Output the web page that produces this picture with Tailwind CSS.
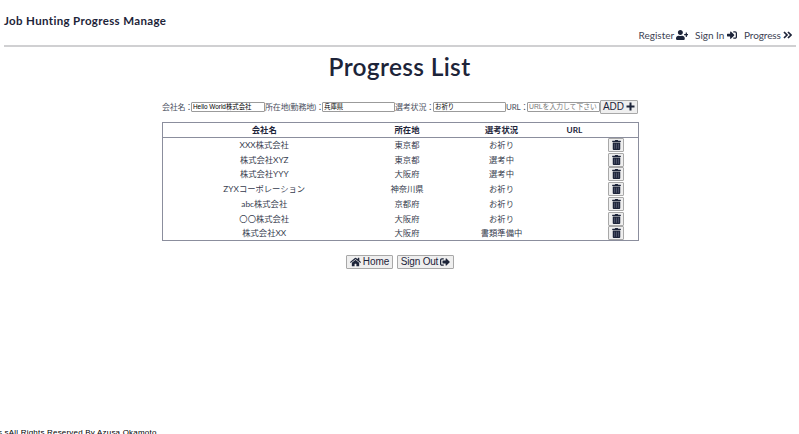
<!DOCTYPE html>
<html lang="ja">
<head>
<meta charset="utf-8">
<title>Job Hunting Progress Manage</title>
<script src="https://cdn.jsdelivr.net/npm/@tailwindcss/browser@4"></script>
</head>
<body class="bg-white text-[#1d2439] font-[Lato,'Noto_Sans_CJK_JP',sans-serif]">
<svg class="hidden">
  <symbol id="trash" viewBox="0 0 448 512"><path d="M32 464a48 48 0 0 0 48 48h288a48 48 0 0 0 48-48V128H32zM432 32H312l-9.4-18.7A24 24 0 0 0 281.1 0H166.8a23.72 23.72 0 0 0-21.4 13.3L136 32H16A16 16 0 0 0 0 48v32a16 16 0 0 0 16 16h416a16 16 0 0 0 16-16V48a16 16 0 0 0-16-16z"/><path d="M128 208v224M224 208v224M320 208v224" stroke="#70748a" stroke-width="30" stroke-linecap="round"/></symbol>
</svg>
<div class="h-[434px] w-[799px] overflow-hidden flex flex-col">
  <header class="ml-1 mr-[3px] h-[47px] shrink-0 border-b-2 border-[#d0d0d2] flex flex-col">
    <h1 class="mt-[14px] h-[14px] leading-[14px] text-[11.5px] font-bold tracking-[0.35px] whitespace-nowrap">Job Hunting Progress Manage</h1>
    <nav class="h-[14px] leading-[14px] text-[10px] text-[#3c4254] flex justify-end items-center pr-[4px] whitespace-nowrap">
      <span class="w-[35px]">Register</span>
      <svg class="ml-[2px] w-[12.5px] h-[10px] fill-[#1d2439]" viewBox="0 0 640 512"><path d="M624 208h-64v-64c0-8.8-7.2-16-16-16h-32c-8.8 0-16 7.2-16 16v64h-64c-8.8 0-16 7.2-16 16v32c0 8.8 7.2 16 16 16h64v64c0 8.8 7.2 16 16 16h32c8.8 0 16-7.2 16-16v-64h64c8.8 0 16-7.2 16-16v-32c0-8.8-7.2-16-16-16zm-400 48c70.7 0 128-57.3 128-128S294.7 0 224 0 96 57.3 96 128s57.3 128 128 128zm89.6 32h-16.7c-22.2 10.2-46.9 16-72.9 16s-50.6-5.8-72.9-16h-16.7C60.2 288 0 348.2 0 422.4V464c0 26.5 21.5 48 48 48h352c26.5 0 48-21.5 48-48v-41.6c0-74.2-60.2-134.4-134.4-134.4z"/></svg>
      <span class="ml-[7px] w-[30px]">Sign In</span>
      <svg class="ml-[2px] w-[10px] h-[10px] fill-[#1d2439]" viewBox="0 0 512 512"><path d="M416 448h-84c-6.6 0-12-5.4-12-12v-40c0-6.6 5.4-12 12-12h84c17.7 0 32-14.3 32-32V160c0-17.7-14.3-32-32-32h-84c-6.6 0-12-5.4-12-12V76c0-6.6 5.4-12 12-12h84c53 0 96 43 96 96v192c0 53-43 96-96 96zm-47-201L201 79c-15-15-41-4.5-41 17v96H24c-13.3 0-24 10.7-24 24v96c0 13.3 10.7 24 24 24h136v96c0 21.5 26 32 41 17l168-168c9.3-9.4 9.3-24.6 0-34z"/></svg>
      <span class="ml-[7px] w-[37px] tracking-[-0.1px]">Progress</span>
      <svg class="ml-[2px] w-[9px] h-[10px] fill-none stroke-[#1d2439] stroke-[1.7]" viewBox="0 0 9 10"><path d="M1 2l3 3-3 3M5 2l3 3-3 3"/></svg>
    </nav>
  </header>

  <h2 class="mt-[6px] h-[28px] leading-[28px] text-center text-[24.5px] font-semibold tracking-[0.33px] whitespace-nowrap">Progress List</h2>

  <form class="mt-[18px] ml-[162px] w-[476px] h-[15px] flex items-center text-[8px] leading-[14px] text-[#4a4f60] whitespace-nowrap shrink-0">
    <label class="w-[29px] shrink-0 tracking-[-0.3px]">会社名：</label>
    <input class="w-[74px] h-[10px] border border-[#9b9b9b] rounded-[1px] px-[1px] text-[6.4px] leading-[8px] text-black font-['Liberation_Sans','Noto_Sans_CJK_JP',sans-serif]" value="Hello World株式会社">
    <label class="w-[57px] shrink-0 tracking-[-0.15px]">所在地(勤務地)：</label>
    <input class="w-[73px] h-[10px] border border-[#9b9b9b] rounded-[1px] px-[1px] text-[6.4px] leading-[8px] text-black font-['Liberation_Sans','Noto_Sans_CJK_JP',sans-serif]" value="兵庫県">
    <label class="w-[38px] shrink-0 tracking-[-0.2px]">選考状況：</label>
    <input class="w-[73px] h-[10px] border border-[#9b9b9b] rounded-[1px] px-[1px] text-[6.4px] leading-[8px] text-black font-['Liberation_Sans','Noto_Sans_CJK_JP',sans-serif]" value="お祈り">
    <label class="w-[21px] shrink-0 tracking-[-0.2px]">URL：</label>
    <input class="w-[73px] h-[10px] border border-[#9b9b9b] rounded-[1px] px-[1px] text-[6.8px] leading-[8px] placeholder:text-[#757575] font-['Liberation_Sans','Noto_Sans_CJK_JP',sans-serif]" placeholder="URLを入力して下さい">
    <button type="button" class="w-[38px] shrink-0 h-[14px] border border-[#a8a8a8] rounded-[1px] bg-[#efefef] flex items-center justify-center gap-[2px] text-[10px] leading-[12px] text-[#1d2439] font-['Liberation_Sans',sans-serif]">ADD
      <svg class="w-[9px] h-[9px] shrink-0 fill-none stroke-[#1d2439] stroke-2" viewBox="0 0 9 9"><path d="M4.5.5v8M.5 4.5h8"/></svg></button>
  </form>

  <table class="mt-[8px] ml-[162px] w-[476px] table-fixed border border-[#8b8e9d] border-collapse text-center text-[8.3px] leading-[14px] text-[#353b4d]">
    <colgroup><col class="w-[203px]"><col class="w-[83px]"><col class="w-[106px]"><col class="w-[40px]"><col class="w-[44px]"></colgroup>
    <thead><tr class="h-[14.75px] border-b border-[#8b8e9d] text-[#1d2439]"><th class="p-0">会社名</th><th class="p-0">所在地</th><th class="p-0">選考状況</th><th class="p-0">URL</th><th class="p-0"></th></tr></thead>
    <tbody id="rows"></tbody>
  </table>

  <div class="mt-[14px] flex justify-center gap-[4px] pl-px text-[10px] leading-[12px] font-['Liberation_Sans',sans-serif] whitespace-nowrap">
    <button class="w-[47px] h-[14px] border border-[#a8a8a8] rounded-[1px] bg-[#efefef] flex items-center justify-center gap-[2px] tracking-[-0.1px]">
      <svg class="w-[11px] h-[10px] shrink-0 fill-[#1d2439]" viewBox="0 0 576 512"><path d="M280.37 148.26L96 300.11V464a16 16 0 0 0 16 16l112.06-.29a16 16 0 0 0 15.92-16V368a16 16 0 0 1 16-16h64a16 16 0 0 1 16 16v95.64a16 16 0 0 0 16 16.05L464 480a16 16 0 0 0 16-16V300L295.67 148.26a12.19 12.19 0 0 0-15.3 0zM571.6 251.47L488 182.56V44.05a12 12 0 0 0-12-12h-56a12 12 0 0 0-12 12v72.61L318.47 43a48 48 0 0 0-61 0L4.34 251.47a12 12 0 0 0-1.6 16.9l25.5 31A12 12 0 0 0 45.15 301l235.22-193.74a12.19 12.19 0 0 1 15.3 0L530.9 301a12 12 0 0 0 16.9-1.6l25.5-31a12 12 0 0 0-1.7-16.93z"/></svg>Home</button>
    <button class="w-[57px] h-[14px] border border-[#a8a8a8] rounded-[1px] bg-[#efefef] flex items-center justify-center gap-[2px] tracking-[-0.2px]">Sign Out
      <svg class="w-[10px] h-[10px] shrink-0 fill-[#1d2439]" viewBox="0 0 512 512"><path d="M497 273L329 441c-15 15-41 4.5-41-17v-96H152c-13.3 0-24-10.7-24-24v-96c0-13.3 10.7-24 24-24h136V88c0-21.4 25.9-32 41-17l168 168c9.3 9.4 9.3 24.6 0 34zM192 436v-40c0-6.6-5.4-12-12-12H96c-17.7 0-32-14.3-32-32V160c0-17.7 14.3-32 32-32h84c6.6 0 12-5.4 12-12V76c0-6.6-5.4-12-12-12H96c-53 0-96 43-96 96v192c0 53 43 96 96 96h84c6.6 0 12-5.4 12-12z"/></svg></button>
  </div>

  <footer class="mt-auto h-[6px] shrink-0 overflow-hidden text-[8px] leading-[10px] text-black font-['Liberation_Sans',sans-serif] whitespace-nowrap"><p class="-ml-[2px] tracking-[0.2px]">s sAll Rights Reserved By Azusa Okamoto</p></footer>
</div>
<script>
const rows = [['XXX株式会社','東京都','お祈り'],['株式会社XYZ','東京都','選考中'],['株式会社YYY','大阪府','選考中'],['ZYXコーポレーション','神奈川県','お祈り'],['abc株式会社','京都府','お祈り'],['〇〇株式会社','大阪府','お祈り'],['株式会社XX','大阪府','書類準備中']];
document.getElementById('rows').innerHTML = rows.map(r => `<tr class="h-[14.75px]">${r.map(c => `<td class="p-0 whitespace-nowrap">${c}</td>`).join('')}<td class="p-0"></td><td class="p-0"><button class="mx-auto w-[16px] h-[14px] border border-[#a8a8a8] rounded-[1px] bg-[#efefef] flex items-center justify-center"><svg class="w-[9px] h-[10px] fill-[#1d2439]"><use href="#trash"/></svg></button></td></tr>`).join('');
</script>
</body>
</html>
